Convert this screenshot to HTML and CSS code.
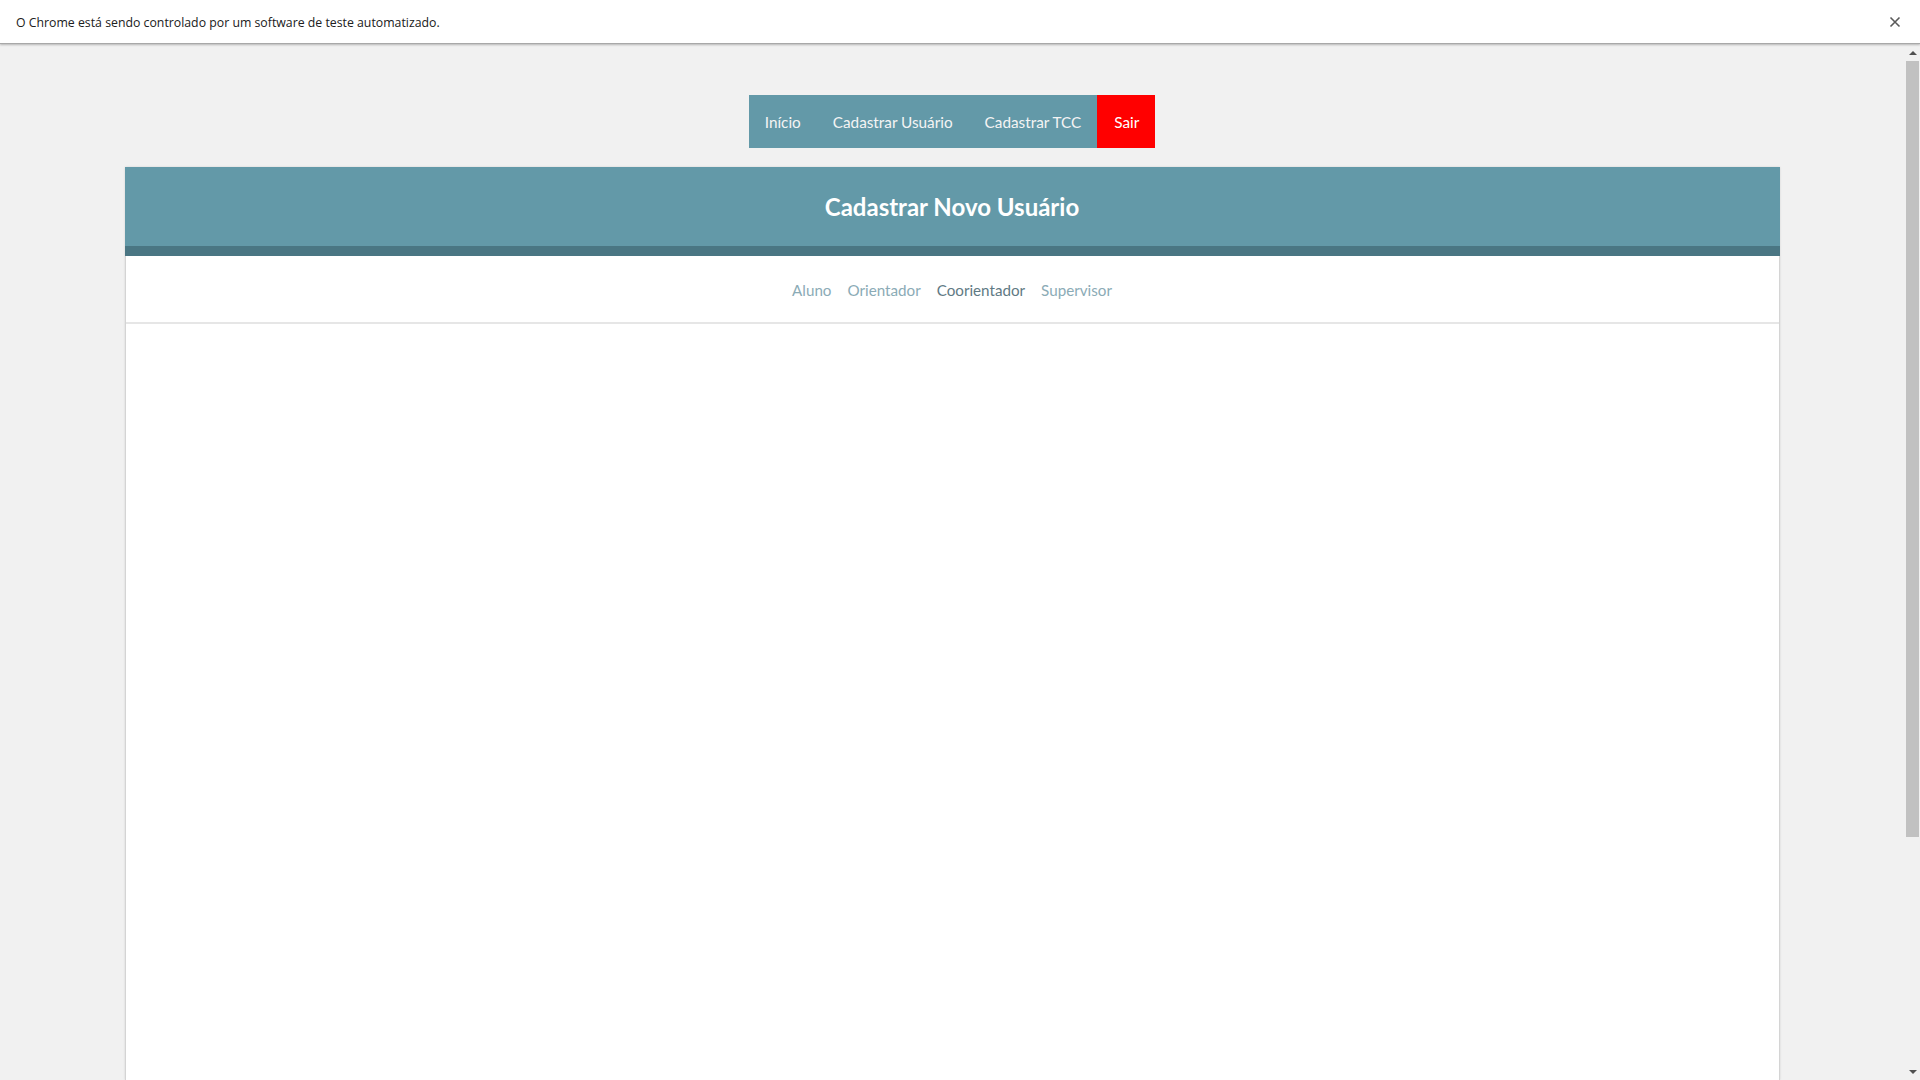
FILE: index.html
```html
<!DOCTYPE html>
<html lang="pt-BR">
<head>
<meta charset="utf-8">
<title>Cadastrar Novo Usuário</title>
<link rel="stylesheet" href="styles.css">
</head>
<body>
<div class="infobar">
  <span class="infobar-text">O Chrome está sendo controlado por um software de teste automatizado.</span>
  <svg class="infobar-close" width="12" height="12" viewBox="0 0 12 12"><path d="M1.5 1.5 L10.5 10.5 M10.5 1.5 L1.5 10.5" stroke="#5a5a5a" stroke-width="1.6" fill="none"/></svg>
</div>
<div class="viewport">
  <main class="page">
    <nav class="topnav">
      <a class="nav-item" href="#">Início</a>
      <a class="nav-item" href="#">Cadastrar Usuário</a>
      <a class="nav-item" href="#">Cadastrar TCC</a>
      <a class="nav-item nav-exit" href="#">Sair</a>
    </nav>
    <section class="card">
      <header class="card-header">
        <h1 class="card-title">Cadastrar Novo Usuário</h1>
      </header>
      <div class="tabs">
        <a class="tab" href="#">Aluno</a>
        <a class="tab" href="#">Orientador</a>
        <a class="tab tab-active" href="#">Coorientador</a>
        <a class="tab" href="#">Supervisor</a>
      </div>
      <div class="card-body"></div>
    </section>
  </main>
  <div class="scrollbar">
    <div class="sb-arrow sb-up"></div>
    <div class="sb-track"><div class="sb-thumb"></div></div>
    <div class="sb-arrow sb-down"></div>
  </div>
</div>
</body>
</html>
```
FILE: styles.css
```css
html, body {
  margin: 0;
  padding: 0;
  height: 100%;
  overflow: hidden;
}
body {
  background: #f1f1f1;
  font-family: Lato, "Open Sans", sans-serif;
  display: flex;
  flex-direction: column;
}
.infobar {
  height: 44px;
  flex: 0 0 44px;
  background: #ffffff;
  border-bottom: 1px solid #a8a8a8;
  box-shadow: 0 1px 2px rgba(0,0,0,0.25);
  display: flex;
  align-items: center;
  justify-content: space-between;
  padding: 1px 19px 0 16px;
  box-sizing: border-box;
  position: relative;
  z-index: 2;
}
.infobar-text {
  font-family: "Open Sans", "Noto Sans", sans-serif;
  font-size: 12.3px;
  color: #202020;
}
.viewport {
  flex: 1;
  display: flex;
  min-height: 0;
}
.page {
  flex: 1;
  display: flex;
  flex-direction: column;
  align-items: center;
  padding-top: 51px;
  padding-right: 1px;
  overflow: hidden;
}
.topnav {
  display: flex;
  background: #6399a8;
  height: 53px;
}
.nav-item {
  display: flex;
  align-items: center;
  padding: 0 16px;
  color: #f4f4f4;
  text-decoration: none;
  font-size: 15.3px;
}
.nav-exit {
  background: #ff0000;
  color: #ffffff;
  padding: 0 16px 0 17px;
}
.card {
  margin-top: 19px;
  width: 1653px;
  flex: 1;
  background: #ffffff;
  border-left: 1px solid #d4d4d4;
  border-right: 1px solid #d4d4d4;
  box-shadow: 0 0 2px rgba(0,0,0,0.12);
  display: flex;
  flex-direction: column;
}
.card-header {
  background: #6399a8;
  border-bottom: 10px solid #4a7683;
  height: 79px;
  display: flex;
  align-items: center;
  justify-content: center;
  margin: 0 -1px;
}
.card-title {
  margin: 0;
  color: #ffffff;
  font-size: 24px;
  font-weight: 700;
}
.tabs {
  height: 68px;
  padding-top: 2px;
  box-sizing: border-box;
  border-bottom: 2px solid #e6e6e6;
  display: flex;
  align-items: center;
  justify-content: center;
  gap: 16px;
}
.tab {
  font-size: 15.2px;
  color: #8babb6;
  text-decoration: none;
}
.tab-active {
  color: #5f7a84;
}
.card-body {
  flex: 1;
}
.scrollbar {
  width: 15px;
  flex: 0 0 15px;
  background: #f1f1f1;
  display: flex;
  flex-direction: column;
}
.sb-arrow {
  height: 17px;
  display: flex;
  align-items: center;
  justify-content: center;
}
.sb-up::before {
  content: "";
  border-left: 4px solid transparent;
  border-right: 4px solid transparent;
  border-bottom: 4px solid #505050;
}
.sb-down::before {
  content: "";
  border-left: 4px solid transparent;
  border-right: 4px solid transparent;
  border-top: 4px solid #505050;
}
.sb-track {
  flex: 1;
  padding: 0 1px;
}
.sb-thumb {
  height: 776px;
  background: #c1c1c1;
}
```
